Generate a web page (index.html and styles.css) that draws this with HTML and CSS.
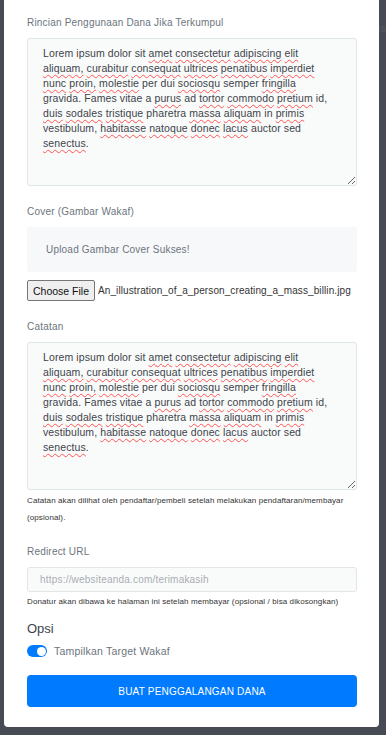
FILE: index.html
```html
<!DOCTYPE html>
<html lang="id">
<head>
    <meta charset="UTF-8">
    <meta name="viewport" content="width=device-width, initial-scale=1.0">
    <title>Buat Penggalangan Dana</title>
    <link rel="stylesheet" href="styles.css">
</head>
<body>
    <div class="backdrop">
        <span class="behind">45</span>
        <div class="modal">
            <div class="form-group">
                <label class="form-label">Rincian Penggunaan Dana Jika Terkumpul</label>
                <div class="textarea">Lorem ipsum dolor sit <span class="typo">amet</span> <span class="typo">consectetur</span> <span class="typo">adipiscing</span> <span class="typo">elit</span>
<span class="typo">aliquam,</span> <span class="typo">curabitur</span> <span class="typo">consequat</span> <span class="typo">ultrices</span> <span class="typo">penatibus</span> <span class="typo">imperdiet</span>
<span class="typo">nunc</span> <span class="typo">proin,</span> <span class="typo">molestie</span> per dui <span class="typo">sociosqu</span> semper <span class="typo">fringilla</span>
gravida. Fames vitae a <span class="typo">purus</span> ad <span class="typo">tortor</span> <span class="typo">commodo</span> <span class="typo">pretium</span> id,
<span class="typo">duis</span> <span class="typo">sodales</span> <span class="typo">tristique</span> pharetra <span class="typo">massa</span> <span class="typo">aliquam</span> in <span class="typo">primis</span>
vestibulum, <span class="typo">habitasse</span> <span class="typo">natoque</span> <span class="typo">donec</span> <span class="typo">lacus</span> auctor sed
<span class="typo">senectus</span>.</div>
            </div>

            <div class="form-group">
                <label class="form-label">Cover (Gambar Wakaf)</label>
                <div class="alert">Upload Gambar Cover Sukses!</div>
                <div class="file-row">
                    <span class="file-btn">Choose File</span>
                    <span class="file-name">An_illustration_of_a_person_creating_a_mass_billin.jpg</span>
                </div>
            </div>

            <div class="form-group">
                <label class="form-label">Catatan</label>
                <div class="textarea">Lorem ipsum dolor sit <span class="typo">amet</span> <span class="typo">consectetur</span> <span class="typo">adipiscing</span> <span class="typo">elit</span>
<span class="typo">aliquam,</span> <span class="typo">curabitur</span> <span class="typo">consequat</span> <span class="typo">ultrices</span> <span class="typo">penatibus</span> <span class="typo">imperdiet</span>
<span class="typo">nunc</span> <span class="typo">proin,</span> <span class="typo">molestie</span> per dui <span class="typo">sociosqu</span> semper <span class="typo">fringilla</span>
gravida. Fames vitae a <span class="typo">purus</span> ad <span class="typo">tortor</span> <span class="typo">commodo</span> <span class="typo">pretium</span> id,
<span class="typo">duis</span> <span class="typo">sodales</span> <span class="typo">tristique</span> pharetra <span class="typo">massa</span> <span class="typo">aliquam</span> in <span class="typo">primis</span>
vestibulum, <span class="typo">habitasse</span> <span class="typo">natoque</span> <span class="typo">donec</span> <span class="typo">lacus</span> auctor sed
<span class="typo">senectus</span>.</div>
                <small class="help help-tall">Catatan akan dilihat oleh pendaftar/pembeli setelah melakukan pendaftaran/membayar (opsional).</small>
            </div>

            <div class="form-group last">
                <label class="form-label">Redirect URL</label>
                <input type="text" class="input" placeholder="https://websiteanda.com/terimakasih">
                <small class="help">Donatur akan dibawa ke halaman ini setelah membayar (opsional / bisa dikosongkan)</small>
            </div>

            <h4 class="section-title">Opsi</h4>
            <div class="switch-row">
                <span class="switch"><span class="knob"></span></span>
                <span class="switch-label">Tampilkan Target Wakaf</span>
            </div>

            <button class="btn-primary">BUAT PENGGALANGAN DANA</button>
        </div>
    </div>
</body>
</html>
```

FILE: styles.css
```css
body {
    margin: 0;
    background-color: #464a52;
    font-family: "Liberation Sans", Arial, sans-serif;
    overflow: hidden;
}

.backdrop {
    height: 735px;
    position: relative;
}

.behind {
    position: absolute;
    right: 0;
    top: 24px;
    font-size: 9px;
    color: #585c64;
}

.modal {
    margin-left: 4px;
    width: 375px;
    box-sizing: border-box;
    background-color: white;
    border-radius: 0 0 4px 4px;
    padding: 16px 22px 20px 23px;
    position: relative;
}

.form-group {
    margin-bottom: 19px;
}

.form-group.last {
    margin-bottom: 12px;
}

.form-label {
    display: block;
    font-size: 10px;
    line-height: 14px;
    color: #6c757d;
    letter-spacing: 0.2px;
    margin-bottom: 8px;
}

.textarea {
    box-sizing: border-box;
    height: 148px;
    padding: 7px 8px 7px 15px;
    background-color: #f9fbfb;
    border: 1px solid #e1e6ea;
    border-radius: 3px;
    font-size: 10.5px;
    line-height: 15px;
    letter-spacing: 0.1px;
    color: #3e434a;
    white-space: pre;
    overflow: hidden;
    resize: vertical;
}

.typo {
    text-decoration: underline wavy #ff5252;
    text-decoration-thickness: 1px;
    text-underline-offset: 2px;
}

.alert {
    height: 45px;
    box-sizing: border-box;
    padding: 0 19px;
    display: flex;
    align-items: center;
    background-color: #f7f8fa;
    border-radius: 3px;
    font-size: 10px;
    color: #6c757d;
    letter-spacing: 0.2px;
}

.file-row {
    margin-top: 8px;
    display: flex;
    align-items: center;
    gap: 3px;
    height: 21px;
}

.file-btn {
    box-sizing: border-box;
    height: 21px;
    padding: 0 5px;
    display: flex;
    align-items: center;
    background-color: #efefef;
    border: 1px solid #767676;
    border-radius: 2px;
    font-size: 10.5px;
    color: #111;
}

.file-name {
    font-size: 10px;
    letter-spacing: 0.1px;
    color: #333;
    white-space: nowrap;
}

.help {
    display: block;
    font-size: 8px;
    letter-spacing: 0.1px;
    color: #333;
    margin-top: 4px;
    line-height: 12px;
}

.help-tall {
    line-height: 17px;
    margin-top: 2px;
}

.input {
    display: block;
    box-sizing: border-box;
    width: 100%;
    height: 25px;
    padding: 0 12px;
    background-color: #f9fbfb;
    border: 1px solid #e1e6ea;
    border-radius: 3px;
    font-family: inherit;
    font-size: 10px;
    letter-spacing: 0.2px;
}

.input::placeholder {
    color: #a9adb2;
}

.section-title {
    margin: 0 0 7px;
    font-size: 13px;
    font-weight: normal;
    line-height: 18px;
    color: #3e434a;
}

.switch-row {
    display: flex;
    align-items: center;
    gap: 7px;
    height: 12px;
}

.switch {
    width: 20px;
    height: 12px;
    border-radius: 6px;
    background-color: #007bff;
    display: flex;
    align-items: center;
    justify-content: flex-end;
    padding: 0 1.5px;
    box-sizing: border-box;
}

.knob {
    width: 9px;
    height: 9px;
    border-radius: 50%;
    background-color: white;
}

.switch-label {
    font-size: 10.5px;
    color: #6c757d;
    letter-spacing: 0.2px;
}

.btn-primary {
    display: block;
    width: 100%;
    height: 32px;
    margin-top: 18px;
    background-color: #007bff;
    color: white;
    border: none;
    border-radius: 4px;
    font-family: inherit;
    font-size: 10px;
    letter-spacing: 0.2px;
    cursor: pointer;
}
```
